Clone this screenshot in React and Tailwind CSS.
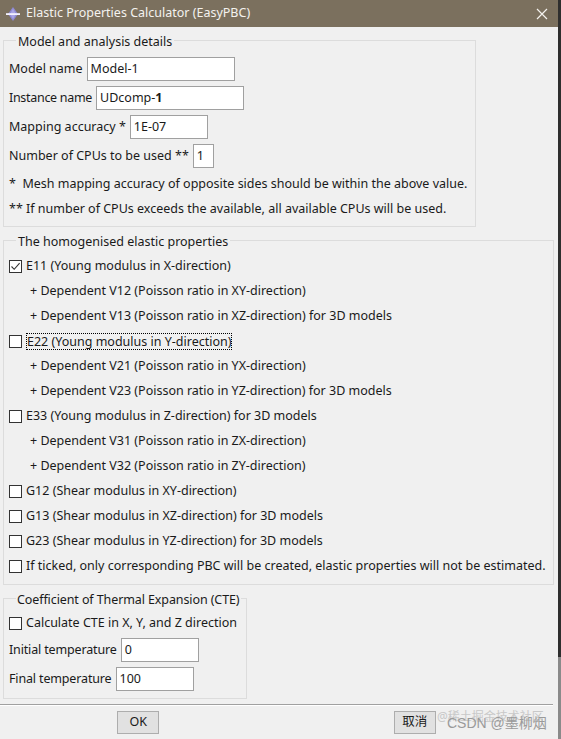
import React from "react";

function Check({ checked }) {
  return (
    <span className="w-[13px] h-[13px] border border-[#333333] bg-white flex items-center justify-center shrink-0">
      {checked && (
        <svg width="11" height="11" viewBox="0 0 11 11">
          <path d="M1.5 5.5 L4.2 8.3 L9.6 2.2" fill="none" stroke="#333333" strokeWidth="1.1" />
        </svg>
      )}
    </span>
  );
}

function CheckRow({ checked, children, focus }) {
  return (
    <div className="h-[25px] flex items-center gap-[4px]">
      <Check checked={checked} />
      <span className={focus ? "border border-dotted border-black leading-[15px]" : ""}>{children}</span>
    </div>
  );
}

function SubRow({ children }) {
  return <div className="h-[25px] flex items-center pl-[21px]">{children}</div>;
}

function Field({ label, value, w, bold, labelClass = "whitespace-nowrap" }) {
  return (
    <div className="h-[24px] flex items-center gap-[4px]">
      <span className={labelClass}>{label}</span>
      <div className={`h-[24px] ${w} border border-[#a0a0a0] bg-white flex items-center px-[3px]`}>
        {bold ? (
          <span>
            {value}
            <b>1</b>
          </span>
        ) : (
          <span>{value}</span>
        )}
      </div>
    </div>
  );
}

function Legend({ children }) {
  return <legend className="ml-[7px] px-[2px] pt-[4px] leading-[18px] text-[#1a1a1a] whitespace-nowrap">{children}</legend>;
}

export default function App() {
  return (
    <div className="w-[561px] h-[739px] bg-[#f0f0f0] flex overflow-hidden relative font-['Noto_Sans','Noto_Sans_CJK_SC',sans-serif] text-[12.5px] text-[#1a1a1a]">
      <div className="w-[558px] flex flex-col shrink-0">
        <div className="h-[27px] shrink-0 bg-[#7b705e] flex items-center pl-[5px] pr-[10px] text-[#f4f2ee]">
          <svg width="16" height="16" viewBox="0 0 16 16" className="shrink-0">
            <path d="M8 1 L13 8 L8 15 L3 8 Z" fill="#8f8ad6" />
            <path d="M8 3 L11 8 L8 13 L5 8 Z" fill="#a9a5e6" />
            <rect x="1" y="7.2" width="14" height="1.8" fill="#f4f2ff" />
          </svg>
          <span className="ml-[5px] text-[12.5px]">Elastic Properties Calculator (EasyPBC)</span>
          <span className="flex-1" />
          <svg width="12" height="12" viewBox="0 0 12 12">
            <path d="M1 1 L11 11 M11 1 L1 11" stroke="#f4f2ee" strokeWidth="1.2" />
          </svg>
        </div>

        <fieldset className="shrink-0 ml-[3px] mt-[2px] w-[473px] border border-[#dcdcdc] px-[5px] pb-[4px]">
          <Legend>Model and analysis details</Legend>
          <div className="flex flex-col gap-[5px] pt-[6px]">
            <Field label="Model name" value="Model-1" w="w-[148px]" />
            <Field label="Instance name" value="UDcomp-" w="w-[148px]" bold labelClass="whitespace-nowrap tracking-[-0.3px]" />
            <Field label="Mapping accuracy *" value="1E-07" w="w-[78px]" />
            <Field label="Number of CPUs to be used **" value="1" w="w-[21px]" />
          </div>
          <div className="mt-[4px] h-[25px] flex items-center whitespace-nowrap">*&nbsp; Mesh mapping accuracy of opposite sides should be within the above value.</div>
          <div className="h-[25px] flex items-center whitespace-nowrap">** If number of CPUs exceeds the available, all available CPUs will be used.</div>
        </fieldset>

        <fieldset className="shrink-0 ml-[3px] mt-[2px] w-[551px] border border-[#dcdcdc] px-[5px] pb-[5px]">
          <Legend>The homogenised elastic properties</Legend>
          <div className="pt-[3px] flex flex-col whitespace-nowrap">
            <CheckRow checked>E11 (Young modulus in X-direction)</CheckRow>
            <SubRow>+ Dependent V12 (Poisson ratio in XY-direction)</SubRow>
            <SubRow>+ Dependent V13 (Poisson ratio in XZ-direction) for 3D models</SubRow>
            <CheckRow focus>E22 (Young modulus in Y-direction)</CheckRow>
            <SubRow>+ Dependent V21 (Poisson ratio in YX-direction)</SubRow>
            <SubRow>+ Dependent V23 (Poisson ratio in YZ-direction) for 3D models</SubRow>
            <CheckRow>E33 (Young modulus in Z-direction) for 3D models</CheckRow>
            <SubRow>+ Dependent V31 (Poisson ratio in ZX-direction)</SubRow>
            <SubRow>+ Dependent V32 (Poisson ratio in ZY-direction)</SubRow>
            <CheckRow>G12 (Shear modulus in XY-direction)</CheckRow>
            <CheckRow>G13 (Shear modulus in XZ-direction) for 3D models</CheckRow>
            <CheckRow>G23 (Shear modulus in YZ-direction) for 3D models</CheckRow>
            <CheckRow>If ticked, only corresponding PBC will be created, elastic properties will not be estimated.</CheckRow>
          </div>
        </fieldset>

        <fieldset className="shrink-0 min-w-0 ml-[3px] mt-[2px] w-[244px] border border-[#dcdcdc] px-[5px] pb-[7px]">
          <legend className="ml-[7px] px-[1px] pt-[4px] leading-[18px] text-[#1a1a1a] whitespace-nowrap tracking-[-0.1px]">Coefficient of Thermal Expansion (CTE)</legend>
          <div className="pt-[2px] flex flex-col whitespace-nowrap">
            <CheckRow>Calculate CTE in X, Y, and Z direction</CheckRow>
            <div className="mt-[2px] flex flex-col gap-[5px]">
              <Field label="Initial temperature" value="0" w="w-[78px]" labelClass="whitespace-nowrap tracking-[-0.15px]" />
              <Field label="Final temperature" value="100" w="w-[78px]" labelClass="whitespace-nowrap tracking-[-0.15px]" />
            </div>
          </div>
        </fieldset>

        <div className="shrink-0 mt-[5px] w-[553px] h-[1px] bg-[#a0a0a0]" />
        <div className="shrink-0 w-[553px] h-[1px] bg-[#ffffff]" />
        <div className="shrink-0 mt-[5px] w-[553px] flex justify-around">
          <button className="w-[42px] h-[23px] border border-[#adadad] bg-[#e1e1e1] text-[12.5px] leading-none">OK</button>
          <button className="w-[42px] h-[23px] border border-[#adadad] bg-[#e1e1e1] text-[12.5px] leading-none">取消</button>
        </div>
      </div>
      <div className="w-[3px] flex flex-col shrink-0">
        <div className="h-[657px] bg-[#2e2e2e]" />
        <div className="flex-1 bg-[#8a8a8a]" />
      </div>

      <div className="absolute left-[437px] top-[711px] text-[12px] text-[#c8c8c8] leading-none whitespace-nowrap">@稀土掘金技术社区</div>
      <div className="absolute left-[447px] top-[716px] text-[14px] text-[#9a9a9a] leading-none whitespace-nowrap font-['Liberation_Sans','Noto_Sans_CJK_SC',sans-serif]">CSDN @墨柳烟</div>
    </div>
  );
}
